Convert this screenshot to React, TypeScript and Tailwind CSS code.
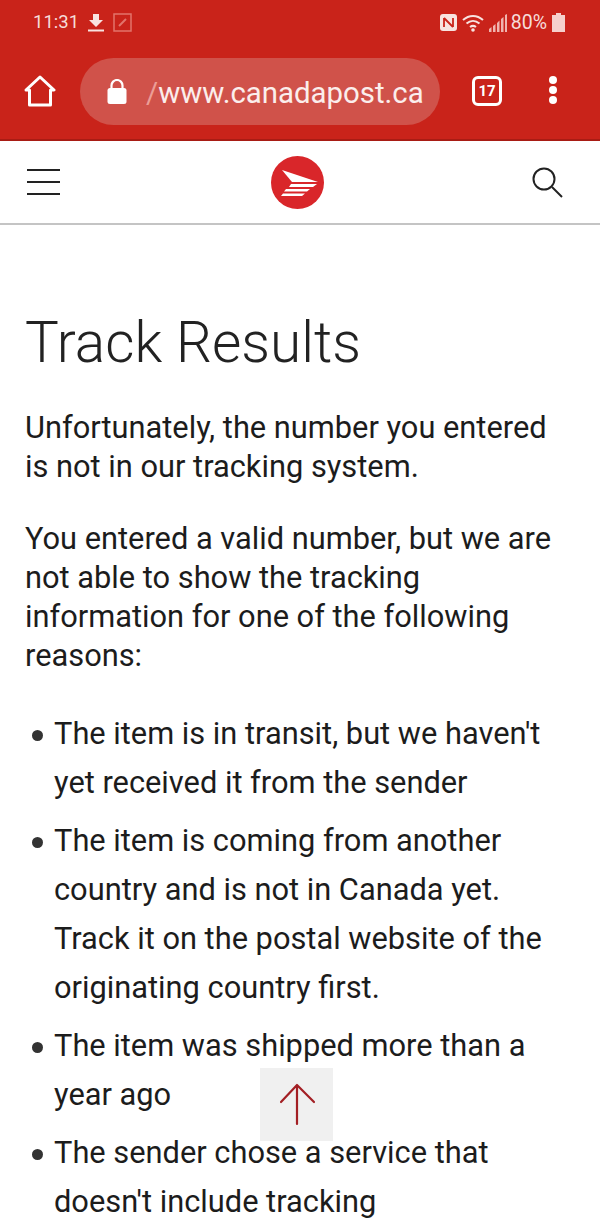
const reasons = [
  ["The item is in transit, but we haven't", "yet received it from the sender"],
  [
    "The item is coming from another",
    "country and is not in Canada yet.",
    "Track it on the postal website of the",
    "originating country first.",
  ],
  ["The item was shipped more than a", "year ago"],
  ["The sender chose a service that", "doesn't include tracking"],
];

function StatusBar() {
  return (
    <div className="flex h-[44px] items-center justify-between pl-[33px] pr-[35px] pt-[1px] text-[#f6dcd9]">
      <div className="flex items-center gap-[9px]">
        <span className="text-[18.500px]">11:31</span>
        <svg width="16" height="18" viewBox="0 0 16 18" fill="#f8e3e0">
          <path d="M5 0h6v6h4l-7 7-7-7h4z" />
          <rect x="0" y="15.500" width="16" height="2" />
        </svg>
        <svg width="19" height="19" viewBox="0 0 19 19" fill="none" stroke="#e2746b" strokeWidth="1.500">
          <rect x="1" y="1" width="17" height="17" />
          <path d="M6 13l7-7" strokeWidth="2" />
        </svg>
      </div>
      <div className="flex items-center gap-[5px]">
        <svg width="17" height="17" viewBox="0 0 17 17">
          <rect width="17" height="17" rx="3" fill="#f8e3e0" />
          <path d="M4 4v9M4 4l9 9M13 4v9" stroke="#c9231a" strokeWidth="1.800" fill="none" />
        </svg>
        <svg width="22" height="18" viewBox="0 0 22 18" fill="none" stroke="#f8e3e0" strokeWidth="2">
          <path d="M1 6c6-5.500 14-5.500 20 0M4.500 9.500c4-3.500 9-3.500 13 0M8 13c2-1.500 4-1.500 6 0" />
          <circle cx="11" cy="16" r="1.800" fill="#f8e3e0" stroke="none" />
        </svg>
        <svg width="18" height="18" viewBox="0 0 18 18" fill="#f0b5af">
          <path d="M0 15l2.500-2v5H0zM4 12l2.500-2v8H4zM8 9l2.500-2.500V18H8zM12 5l2.500-2v15H12zM16 1l2-1v18h-2z" />
        </svg>
        <span className="ml-[-1px] text-[19.500px]">80%</span>
        <svg width="13" height="19" viewBox="0 0 13 19" fill="#f6d0cc">
          <path d="M4 0h5v2h4v17H0V2h4z" />
        </svg>
      </div>
    </div>
  );
}

function BrowserBar() {
  return (
    <div className="flex h-[97px] items-start border-b-[2px] border-[#a81c14] pl-[24px] pt-[14px]">
      <svg className="mt-[17px]" width="32" height="32" viewBox="0 0 32 32" fill="none" stroke="#fff" strokeWidth="3" strokeLinejoin="round">
        <path d="M2 15L16 2l14 13h-3.500v15h-21V15z" />
      </svg>
      <div className="ml-[24px] flex h-[67px] w-[360px] items-center overflow-hidden rounded-full bg-[#d0524a] pl-[27px]">
        <svg width="20" height="25" viewBox="0 0 20 25" fill="#fff">
          <path d="M4.500 10V6.500a5.500 5.500 0 0 1 11 0V10" fill="none" stroke="#fff" strokeWidth="2.200" />
          <rect x="0.500" y="9" width="19" height="16" rx="2.500" />
        </svg>
        <span className="ml-[19px] pt-[4px] text-[29.500px] text-[#ec9d96]">/</span>
        <span className="pt-[4px] text-[29.400px] text-[#fbeeec]">www.canadapost.ca</span>
      </div>
      <div className="ml-[32px] mt-[18px] flex h-[30px] w-[30px] items-center justify-center rounded-[6px] border-[3px] border-white text-[15px] font-bold text-white">
        17
      </div>
      <div className="ml-[47px] mt-[18px] flex flex-col gap-[2px]">
        <span className="h-[8px] w-[8px] rounded-full bg-white" />
        <span className="h-[8px] w-[8px] rounded-full bg-white" />
        <span className="h-[8px] w-[8px] rounded-full bg-white" />
      </div>
    </div>
  );
}

function SiteHeader() {
  return (
    <div className="flex h-[84px] items-center justify-between border-b-[2px] border-[#c4c4c4] bg-white pl-[27px] pr-[37px]">
      <div className="flex w-[33px] flex-col gap-[10px]">
        <span className="h-[2px] bg-[#222]" />
        <span className="h-[2px] bg-[#222]" />
        <span className="h-[2px] bg-[#222]" />
      </div>
      <svg className="ml-[3px] mt-[1px]" width="53" height="53" viewBox="0 0 53 53">
        <circle cx="26.500" cy="26.500" r="26.500" fill="#d9262a" />
        <path d="M11 14l36 12-26 0z" fill="#fff" />
        <path d="M20 28h26l-4 3H18zM15 33h24l-3 2.500H13zM12 37.500h22l-3 2.500H10z" fill="#fff" />
      </svg>
      <svg width="32" height="32" viewBox="0 0 32 32" fill="none" stroke="#222" strokeWidth="2">
        <circle cx="13" cy="13" r="10.500" />
        <path d="M21 21l10 10" />
      </svg>
    </div>
  );
}

export default function App() {
  return (
    <div className="relative h-[1220px] w-[600px] overflow-hidden bg-white font-['Roboto',sans-serif] text-[#1c1c1c]">
      <div className="bg-[#c9231a]">
        <StatusBar />
        <BrowserBar />
      </div>
      <SiteHeader />
      <main className="pl-[25px] pt-[83px]">
        <h1 className="text-[56.700px] font-light leading-[70px] text-[#222]">Track Results</h1>
        <p className="mt-[30px] text-[30.800px] leading-[39px]">
          Unfortunately, the number you entered
          <br />
          is not in our tracking system.
        </p>
        <p className="mt-[33px] text-[30.800px] leading-[39px]">
          You entered a valid number, but we are
          <br />
          not able to show the tracking
          <br />
          information for one of the following
          <br />
          reasons:
        </p>
        <ul className="mt-[34px] flex flex-col gap-[9px]">
          {reasons.map((lines) => (
            <li key={lines[0]} className="flex text-[30.800px] leading-[49px]">
              <span className="ml-[7px] mr-[11px] mt-[21px] h-[11px] w-[11px] shrink-0 rounded-full bg-[#333]" />
              <span className="whitespace-nowrap">
                {lines.map((line) => (
                  <span key={line} className="block">
                    {line}
                  </span>
                ))}
              </span>
            </li>
          ))}
        </ul>
      </main>
      <div className="absolute left-[260px] top-[1068px] flex h-[73px] w-[73px] items-center justify-center bg-[#f0f0f0]">
        <svg width="73" height="73" viewBox="0 0 73 73" fill="none" stroke="#a31f24" strokeWidth="2.200" strokeLinecap="round" strokeLinejoin="round">
          <path d="M37 18v38M21 34l16-17 17 17" />
        </svg>
      </div>
    </div>
  );
}
